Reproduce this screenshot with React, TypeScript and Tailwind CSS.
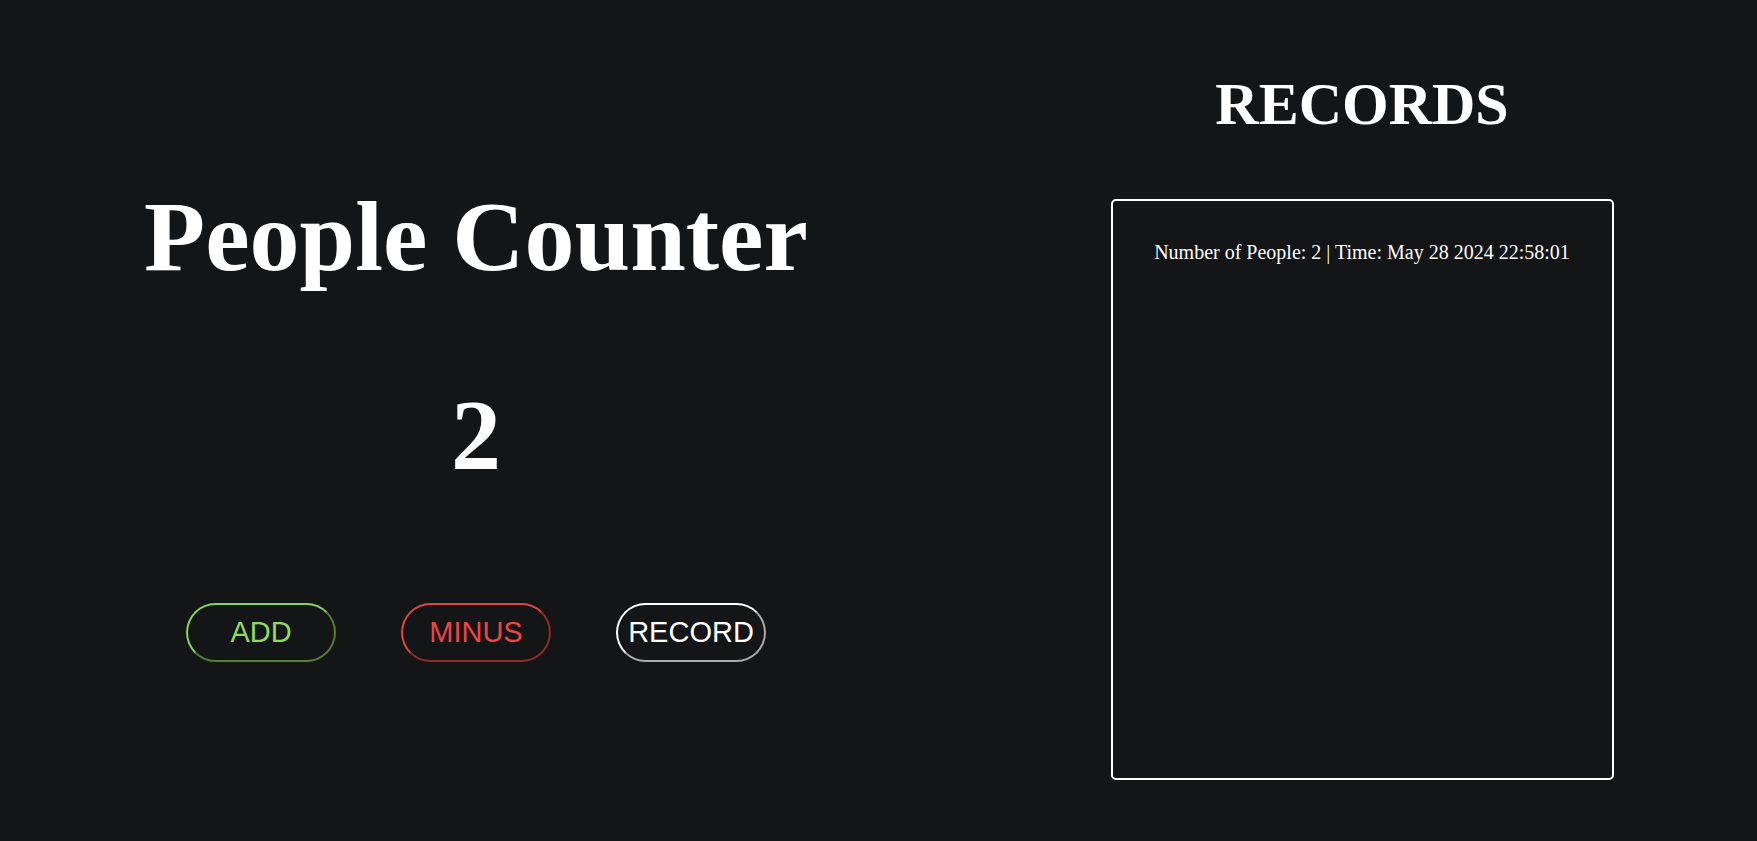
import { useState } from "react";

type Entry = { count: number; time: string };

export default function App() {
  const [count, setCount] = useState(2);
  const [records, setRecords] = useState<Entry[]>([
    { count: 2, time: "May 28 2024 22:58:01" },
  ]);

  function record() {
    const d = new Date();
    const t = d.toDateString().slice(4) + " " + d.toTimeString().slice(0, 8);
    setRecords([...records, { count, time: t }]);
  }

  return (
    <div className="min-h-[841px] w-full bg-[#141517] text-white flex font-['Liberation_Serif',serif]">
      <div className="w-[952px] flex flex-col items-center pt-[179px]">
        <h1 className="text-[100px] font-bold leading-[115px]">People Counter</h1>
        <div className="text-[100px] font-bold leading-[115px] mt-[83px]">{count}</div>
        <div className="flex gap-[65px] mt-[111px] font-['Liberation_Sans',Arial,sans-serif]">
          <button
            onClick={() => setCount(count + 1)}
            className="w-[150px] h-[59px] rounded-full border-2 [border-style:outset] border-[#8bd35c] text-[#8edc5f] text-[29px] bg-transparent"
          >
            ADD
          </button>
          <button
            onClick={() => setCount(Math.max(0, count - 1))}
            className="w-[150px] h-[59px] rounded-full border-2 [border-style:outset] border-[#e34545] text-[#ec4545] text-[29px] bg-transparent"
          >
            MINUS
          </button>
          <button
            onClick={record}
            className="w-[150px] h-[59px] rounded-full border-2 [border-style:outset] border-white text-white text-[29px] bg-transparent"
          >
            RECORD
          </button>
        </div>
      </div>
      <div className="flex-1 flex flex-col items-center pl-[15px] pt-[70px]">
        <h2 className="text-[60px] font-bold leading-[69px]">RECORDS</h2>
        <div className="mt-[60px] w-[503px] h-[581px] border-2 border-white rounded-[5px] pt-[40px] flex flex-col items-center overflow-auto">
          {records.map((r, i) => (
            <p key={i} className="text-[20px] leading-[23px] mb-2">
              Number of People: {r.count} | Time: {r.time}
            </p>
          ))}
        </div>
      </div>
    </div>
  );
}
